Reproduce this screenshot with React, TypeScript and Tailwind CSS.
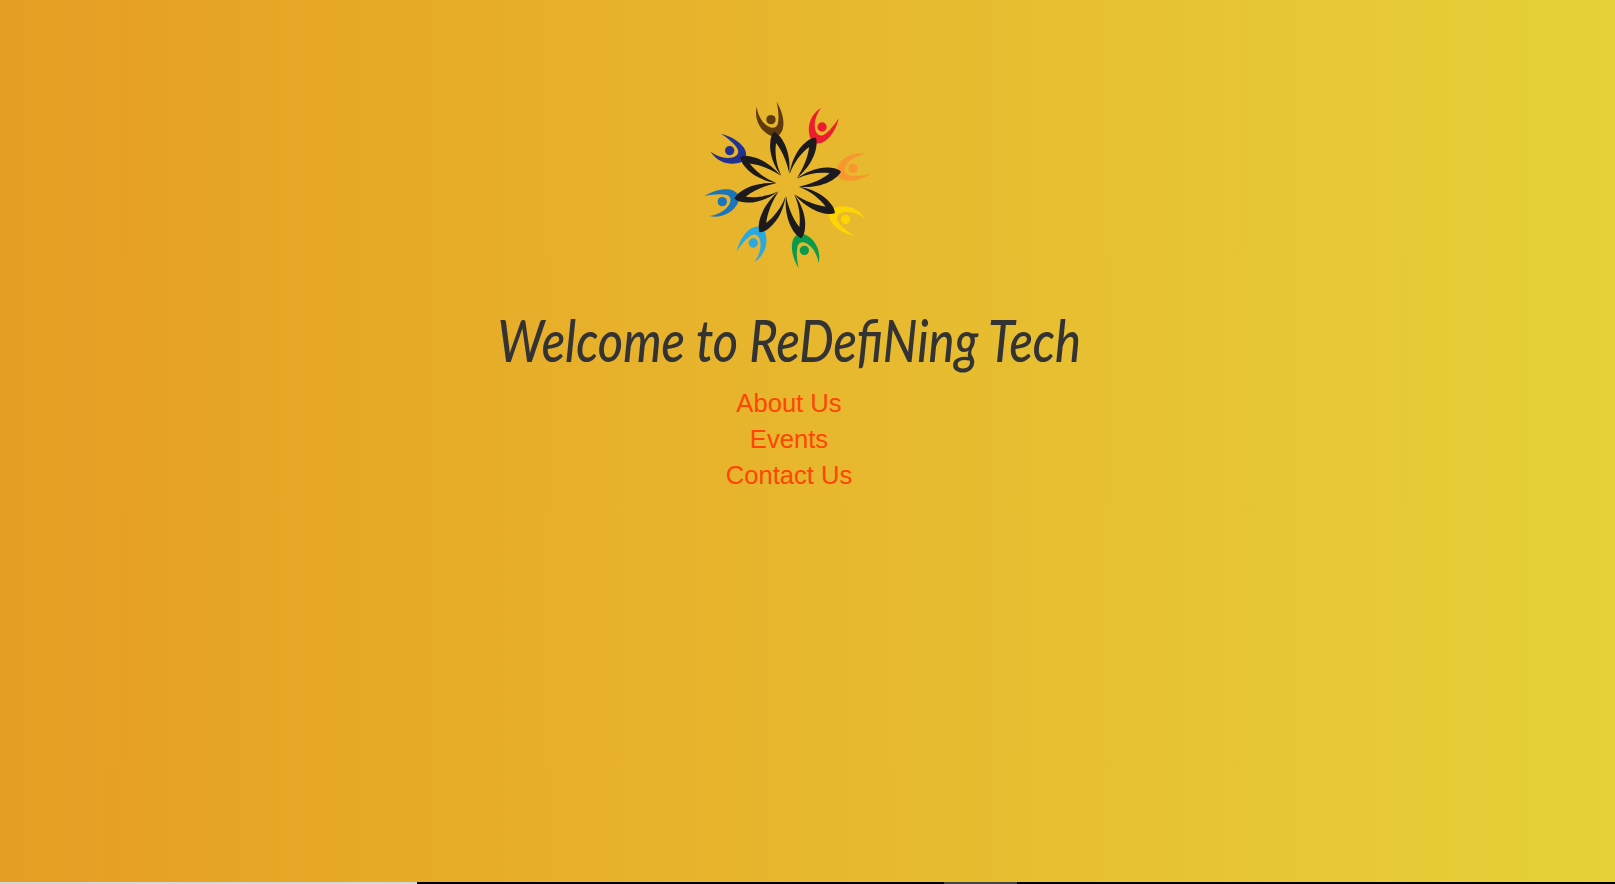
const petals = [0, 1, 2, 3, 4, 5, 6, 7];
const colors = ["#5f3b0c", "#ed1c2e", "#f7982f", "#fdd406", "#0a9a4c", "#2aa9e0", "#1b75bb", "#24328f"];

function Logo() {
  return (
    <svg viewBox="-3 0 660 585" className="h-[195px] w-[220px] blur-[0.4px]">
      {petals.map((i) => (
        <g key={i} transform={`rotate(${i * 45} 323 300)`}>
          <path
            fill={colors[i]}
            d="M283 156C250 148 220 112 230 65C234 90 245 112 264 124C274 130 287 132 293 118C298 100 295 75 290 50C308 80 316 115 306 138C300 150 291 156 283 156Z"
          />
          <circle cx="273" cy="104" r="14" fill={colors[i]} />
          <path
            fill="#1c1a1c"
            d="M283 140C310 155 334 205 328 266C320 228 306 197 288 174C284 202 288 240 304 272C284 248 266 205 271 170C272 155 277 145 283 140Z"
          />
        </g>
      ))}
    </svg>
  );
}

export default function App() {
  return (
    <div className="flex h-[884px] w-full flex-col overflow-hidden bg-gradient-to-r from-[#e69d23] to-[#e6d138]">
      <main className="flex w-[1578px] flex-1 flex-col items-center pt-[85px]">
        <Logo />
        <h1 className="mt-[25px] scale-x-[0.84] font-['Lato',cursive] text-[58px] leading-[70px] font-medium whitespace-nowrap text-[#333333] italic">
          Welcome to ReDefiNing Tech
        </h1>
        <nav className="mt-[10px] flex flex-col items-center font-['Liberation_Sans',sans-serif] text-[25.6px] leading-[36px] text-[#ff4500]">
          <a href="#about">About Us</a>
          <a href="#events">Events</a>
          <a href="#contact">Contact Us</a>
        </nav>
      </main>
      <div className="flex h-[2px] shrink-0 bg-black">
        <div className="w-[417px] bg-[#d5d8da]" />
        <div className="ml-[527px] w-[73px] bg-[#444444]" />
      </div>
    </div>
  );
}
